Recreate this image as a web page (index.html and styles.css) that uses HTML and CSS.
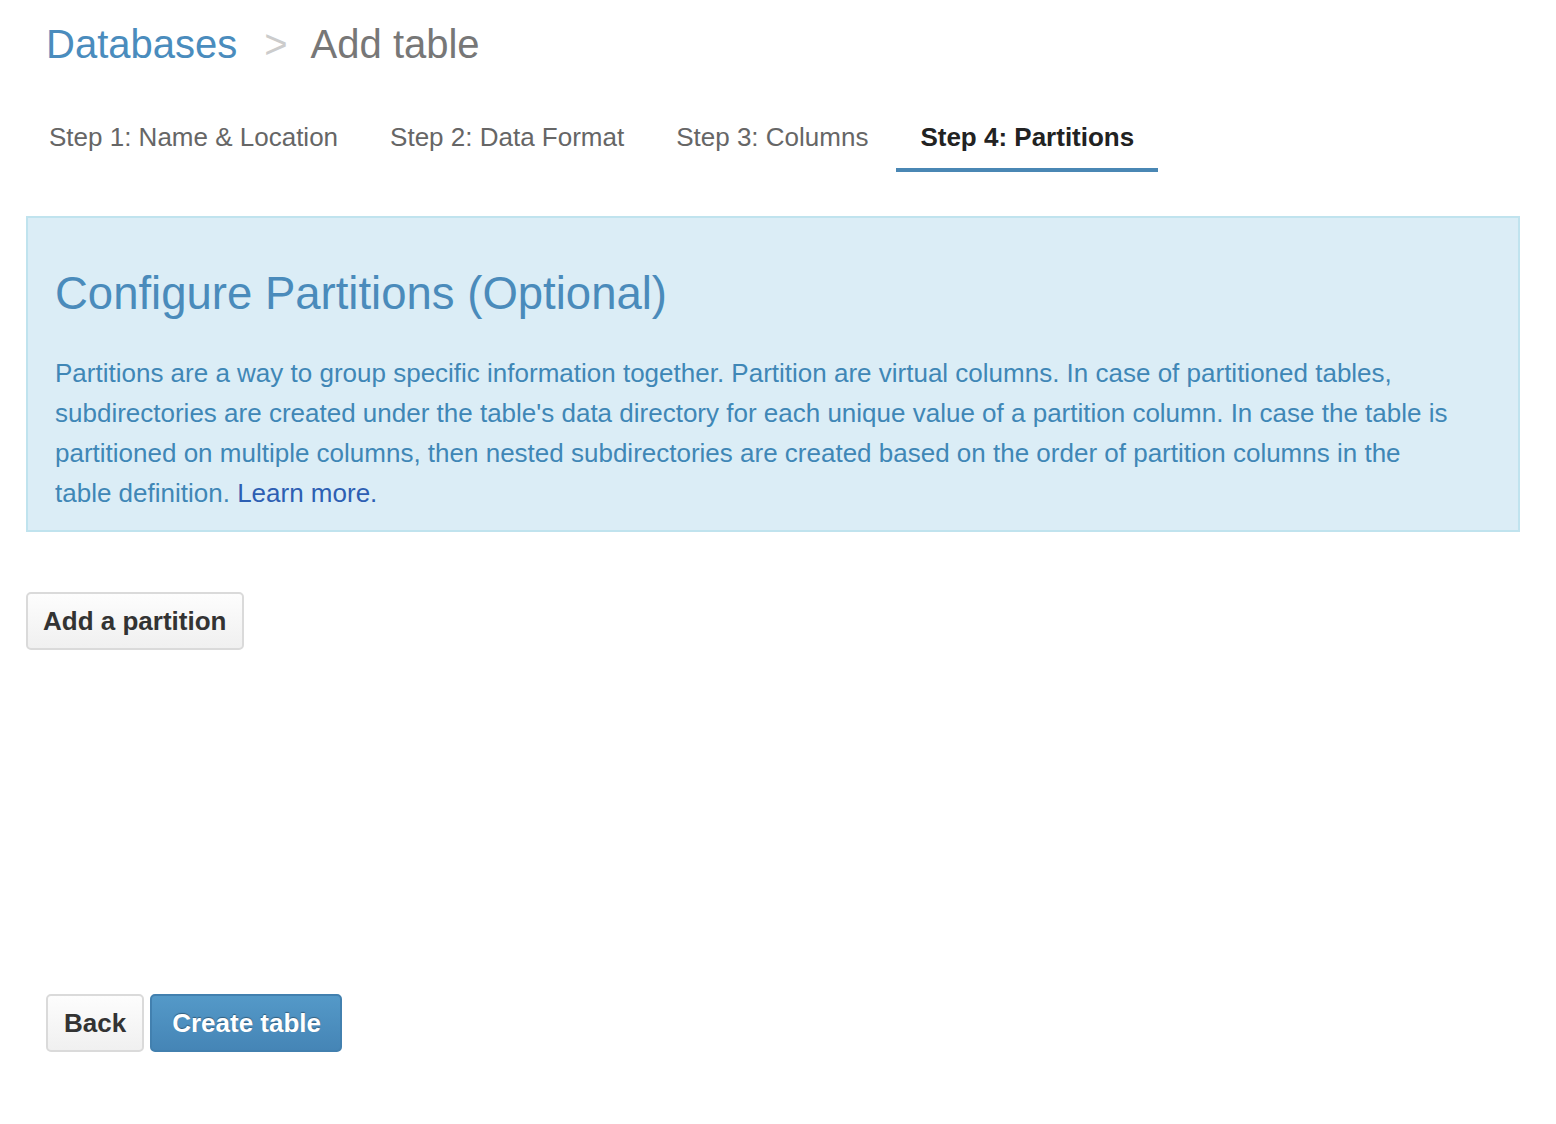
FILE: index.html
```html
<!DOCTYPE html>
<html lang="en">
<head>
<meta charset="utf-8">
<title>Add table</title>
<link rel="stylesheet" href="styles.css">
</head>
<body>
<div class="page">
  <div class="breadcrumb">
    <a class="crumb-link" href="#">Databases</a>
    <span class="crumb-sep">&gt;</span>
    <span class="crumb-current">Add table</span>
  </div>

  <ul class="steps">
    <li class="step">Step 1: Name &amp; Location</li>
    <li class="step">Step 2: Data Format</li>
    <li class="step">Step 3: Columns</li>
    <li class="step active">Step 4: Partitions</li>
  </ul>

  <div class="info-box">
    <h1 class="info-title">Configure Partitions (Optional)</h1>
    <p class="info-text">Partitions are a way to group specific information together. Partition are virtual columns. In case of partitioned tables, subdirectories are created under the table's data directory for each unique value of a partition column. In case the table is partitioned on multiple columns, then nested subdirectories are created based on the order of partition columns in the table definition. <a class="info-link" href="#">Learn more.</a></p>
  </div>

  <div class="add-row">
    <button class="btn">Add a partition</button>
  </div>

  <div class="footer-actions">
    <button class="btn btn-back">Back</button>
    <button class="btn btn-primary">Create table</button>
  </div>
</div>
</body>
</html>
```

FILE: styles.css
```css
html, body {
  margin: 0;
  padding: 0;
  background: #ffffff;
}

body {
  font-family: "Liberation Sans", Arial, Helvetica, sans-serif;
  font-size: 26px;
  line-height: 40px;
  color: #333333;
}

.page {
  padding: 24px 36px 0 26px;
}

.breadcrumb {
  display: flex;
  align-items: baseline;
  font-size: 40px;
  line-height: 40px;
  padding-left: 20px;
}

.crumb-link {
  color: #4a8cbd;
  text-decoration: none;
}

.crumb-sep {
  color: #cccccc;
  margin: 0 23px 0 27px;
}

.crumb-current {
  color: #777777;
}

.steps {
  list-style: none;
  margin: 53px 0 0 -1px;
  padding: 0;
  display: flex;
  gap: 4px;
}

.step {
  padding: 0 24px 11px 24px;
  line-height: 40px;
  color: #666666;
  border-bottom: 4px solid transparent;
}

.step.active {
  color: #222222;
  font-weight: bold;
  border-bottom-color: #4a87b4;
}

.info-box {
  margin-top: 44px;
  background: #dbedf6;
  border: 2px solid #c0e3ee;
  padding: 0 62px 17px 27px;
}

.info-title {
  margin: 51px 0 0 0;
  font-size: 45.5px;
  line-height: 50px;
  font-weight: normal;
  color: #4a8bbb;
}

.info-text {
  margin: 34px 0 0 0;
  color: #3f87b6;
}

.info-link {
  color: #2d5fb3;
  text-decoration: none;
}

.add-row {
  margin-top: 60px;
}

.btn {
  font-family: "Liberation Sans", Arial, Helvetica, sans-serif;
  font-size: 26px;
  font-weight: bold;
  color: #333333;
  height: 58px;
  padding: 0 16px 0 15px;
  border: 2px solid #dadada;
  border-radius: 5px;
  background: linear-gradient(#fdfdfd, #f0f0f0);
  cursor: pointer;
}

.footer-actions {
  margin-top: 344px;
  padding-left: 20px;
  display: flex;
  gap: 6px;
}

.btn-back {
  padding: 0 16px 0 16px;
}

.btn-primary {
  padding: 0 19px 0 20px;
  color: #ffffff;
  border-color: #4280af;
  background: linear-gradient(#5499c8, #4585b6);
  text-shadow: 0 -1px 1px rgba(0, 0, 0, 0.35);
}
```
